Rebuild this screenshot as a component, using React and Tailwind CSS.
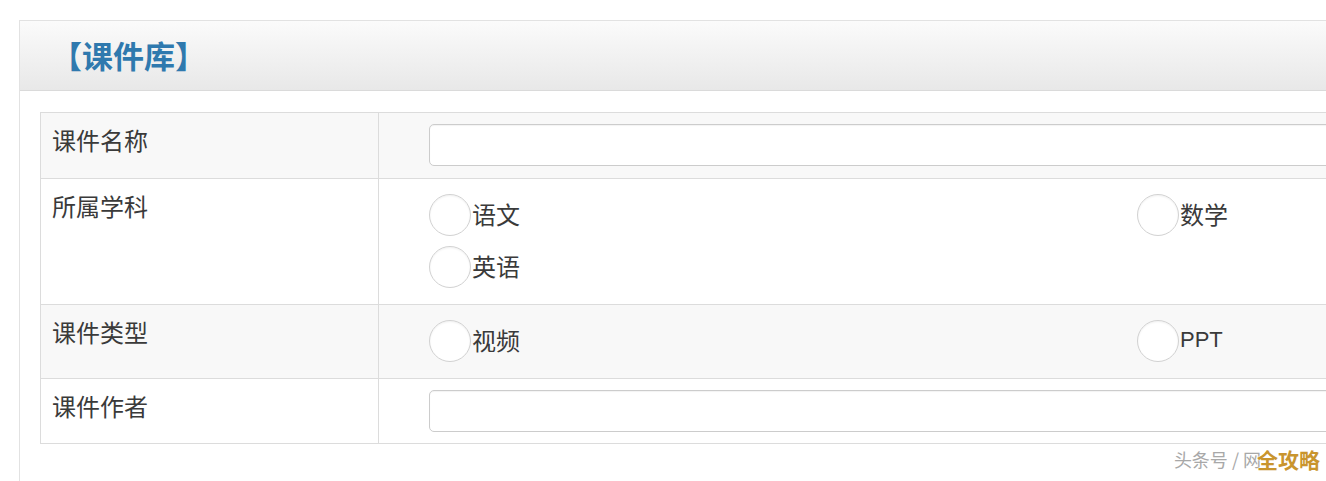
import React from 'react';

const font = { fontFamily: '"Noto Sans CJK SC", "Noto Sans", sans-serif' };

const Radio = ({ label, latin }) => (
  <label className="flex items-center h-[42px] text-[#3a3a3a]">
    <span className="w-[42px] h-[42px] shrink-0 rounded-full border-[1.5px] border-[#d2d2d2] bg-white shadow-[inset_0_1px_2px_rgba(0,0,0,0.06)]" />
    <span
      className={`ml-px leading-none -mt-[3px] ${latin ? 'text-[22px]' : 'text-[24px]'}`}
      style={latin ? { fontFamily: '"Liberation Sans", Arial, sans-serif' } : undefined}
    >
      {label}
    </span>
  </label>
);

const Row = ({ label, striped, children, className }) => (
  <div className={`flex border-b border-[#dcdcdc] ${striped ? 'bg-[#f8f8f8]' : 'bg-white'}`}>
    <div className="w-[338px] shrink-0 border-r border-[#dcdcdc] pl-[11px] pt-[13px] text-[24px] leading-[28px] text-[#3a3a3a]">
      {label}
    </div>
    <div className={`flex-1 pl-[50px] ${className}`}>{children}</div>
  </div>
);

const TextInput = () => (
  <input
    type="text"
    className="block w-full h-[42px] rounded-[5px] border border-[#cccccc] bg-white shadow-[inset_0_1px_1px_rgba(0,0,0,0.05)] outline-none"
  />
);

export default function App() {
  return (
    <div className="relative w-[1326px] h-[481px] overflow-hidden bg-white pt-[20px] pl-[19px]" style={font}>
      <div className="w-[1400px] h-[500px] border border-[#e2e2e2]">
        {/* header */}
        <div className="h-[70px] flex items-center pl-[31px] bg-gradient-to-b from-[#fbfbfb] to-[#e8e8e8] border-b border-[#dadada]">
          <h2 className="text-[31px] font-bold leading-none text-[#2f79ae] -mt-[2px]">【课件库】</h2>
        </div>

        {/* form table */}
        <div className="pt-[21px] pl-[20px]">
          <div className="border border-[#dcdcdc] border-b-0">
            <Row label="课件名称" striped className="h-[65px] pt-[11px]">
              <TextInput />
            </Row>
            <Row label="所属学科" className="h-[125px] pt-[15px]">
              <div className="grid grid-cols-[708px_1fr] gap-y-[10px]">
                <Radio label="语文" />
                <Radio label="数学" />
                <Radio label="英语" />
              </div>
            </Row>
            <Row label="课件类型" striped className="h-[73px] pt-[15px]">
              <div className="grid grid-cols-[708px_1fr]">
                <Radio label="视频" />
                <Radio label="PPT" latin />
              </div>
            </Row>
            <Row label="课件作者" className="h-[64px] pt-[11px]">
              <TextInput />
            </Row>
          </div>
        </div>
      </div>

      {/* watermark */}
      <div className="absolute right-[6px] bottom-[6px] flex items-center">
        <span className="text-[18px] text-[#a8a8a8]">头条号 / 网</span>
        <span className="-ml-[4px] text-[21px] font-bold text-[#c9952e] [text-shadow:0_0_2px_#fff,0_0_2px_#fff]">全攻略</span>
      </div>
    </div>
  );
}
